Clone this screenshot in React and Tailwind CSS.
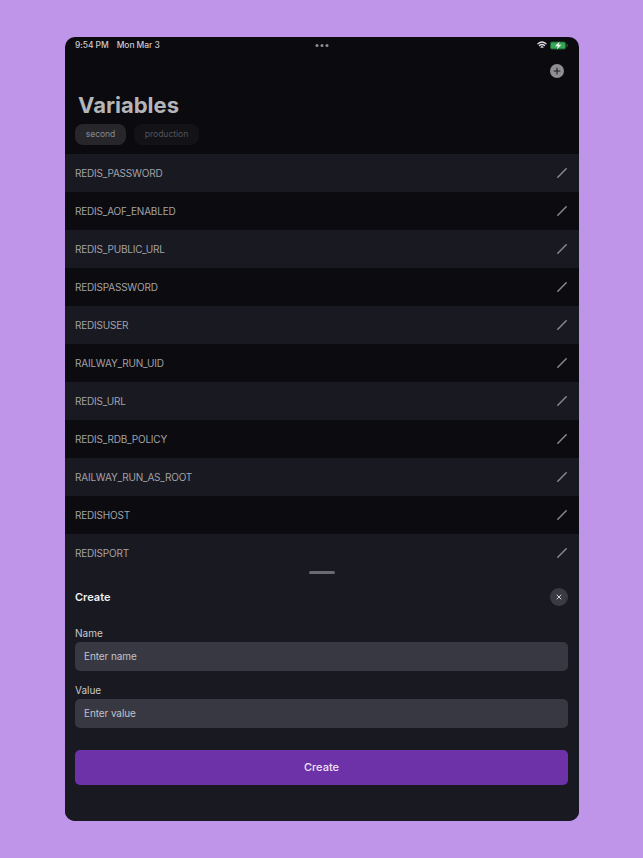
import { Plus, X } from "lucide-react";

const variables = [
  "REDIS_PASSWORD",
  "REDIS_AOF_ENABLED",
  "REDIS_PUBLIC_URL",
  "REDISPASSWORD",
  "REDISUSER",
  "RAILWAY_RUN_UID",
  "REDIS_URL",
  "REDIS_RDB_POLICY",
  "RAILWAY_RUN_AS_ROOT",
  "REDISHOST",
  "REDISPORT",
];

function StatusBar() {
  return (
    <div className="h-[16px] flex items-center justify-between pl-[10px] pr-[11px] relative">
      <div className="flex items-center gap-2 text-[8.5px] tracking-[-0.01em] leading-none font-medium text-[#c9c9cc]">
        <span>9:54 PM</span>
        <span>Mon Mar 3</span>
      </div>
      <div className="absolute left-1/2 -translate-x-1/2 flex gap-[2px]">
        <span className="w-[3px] h-[3px] rounded-full bg-[#8d8d92]" />
        <span className="w-[3px] h-[3px] rounded-full bg-[#8d8d92]" />
        <span className="w-[3px] h-[3px] rounded-full bg-[#8d8d92]" />
      </div>
      <div className="flex items-center gap-[3px]">
        <svg width="10" height="8" viewBox="0 0 20 16" fill="none" stroke="#e2e2e4" strokeWidth="2.6" strokeLinecap="round">
          <path d="M2 5.5C7 1 13 1 18 5.5" />
          <path d="M5 9C8 6.5 12 6.5 15 9" />
          <path d="M8 12.3C9 11.5 11 11.5 12 12.3" />
        </svg>
        <svg width="18" height="9" viewBox="0 0 36 18">
          <rect x="0" y="1" width="32" height="16" rx="4" fill="#1f5f33" />
          <rect x="2" y="3" width="28" height="12" rx="2.5" fill="#34a853" />
          <rect x="33" y="6" width="2.5" height="6" rx="1" fill="#1f5f33" />
          <path d="M19 1L10 10.5H15.5L13.5 17L23 7.5H17.5Z" fill="#f2f2f2" />
        </svg>
      </div>
    </div>
  );
}

function PencilLine() {
  return (
    <svg width="10" height="10" viewBox="0 0 10 10" fill="none" stroke="#8c8c90" strokeWidth="1.4" strokeLinecap="round">
      <path d="M0.8 9.2L9.2 0.8" />
    </svg>
  );
}

function Field({ label, placeholder }) {
  return (
    <div className="flex flex-col">
      <label className="h-[14px] flex items-center text-[10px] leading-none text-[#c9c9ce] mb-[2px]">{label}</label>
      <div className="h-[29px] rounded-[5px] bg-[#383843] flex items-center pl-[9px] text-[10px] tracking-[-0.01em] text-[#c2c2c8]">
        {placeholder}
      </div>
    </div>
  );
}

export default function App() {
  return (
    <div className="w-[643px] h-[858px] bg-[#bf95ea] pt-[37px] pl-[65px] font-['Inter',sans-serif]">
      <div className="w-[514px] h-[784px] rounded-[10px] overflow-hidden bg-[#0a0a0f] flex flex-col">
        {/* HEADER */}
        <div className="h-[117px] shrink-0 flex flex-col">
          <StatusBar />
          <div className="flex justify-end pr-[15px] pt-[11px]">
            <span className="w-[14px] h-[14px] rounded-full bg-[#8f8f92] flex items-center justify-center">
              <Plus size={10} strokeWidth={2.5} className="text-[#1c1c20]" />
            </span>
          </div>
          <h1 className="text-[22px] leading-7 font-bold text-[#b5b5b7] pl-[13px] pt-[13px] box-content">Variables</h1>
          <div className="flex gap-2 pl-[10px] pt-[5px]">
            <span className="h-[21px] w-[51px] rounded-[8px] bg-[#26262b] flex items-center justify-center text-[8.5px] text-[#8a8a8e]">second</span>
            <span className="h-[21px] w-[65px] rounded-[8px] bg-[#121217] flex items-center justify-center text-[8.5px] text-[#55555b]">production</span>
          </div>
        </div>

        {/* LIST */}
        <div className="h-[413px] shrink-0 overflow-hidden">
          {variables.map((name, i) => (
            <div
              key={name}
              className={`h-[38px] flex items-center justify-between pl-[10px] pr-[12px] ${i % 2 === 0 ? "bg-[#191922]" : "bg-[#0b0b10]"}`}
            >
              <span className="text-[10px] tracking-[-0.02em] text-[#a2a2a7]">{name}</span>
              <PencilLine />
            </div>
          ))}
        </div>

        {/* CREATE SHEET */}
        <div className="flex-1 bg-[#191922] flex flex-col px-[11px]">
          <div className="flex justify-center pt-[4px]">
            <span className="w-[26px] h-[3px] rounded-full bg-[#6a6a72]" />
          </div>
          <div className="flex items-center justify-between mt-[14px]">
            <h2 className="text-[11px] leading-none font-semibold text-[#f0f0f2] -ml-px">Create</h2>
            <span className="w-[18px] h-[18px] rounded-full bg-[#3a3a44] flex items-center justify-center">
              <X size={8} strokeWidth={3} className="text-[#d8d8dc]" />
            </span>
          </div>
          <div className="flex flex-col gap-[12px] mt-[20px] -ml-px">
            <Field label="Name" placeholder="Enter name" />
            <Field label="Value" placeholder="Enter value" />
          </div>
          <button className="mt-[22px] -ml-px h-[35px] rounded-[5px] bg-[#6d31a8] text-[11px] font-medium text-[#ece4f4]">
            Create
          </button>
        </div>
      </div>
    </div>
  );
}
